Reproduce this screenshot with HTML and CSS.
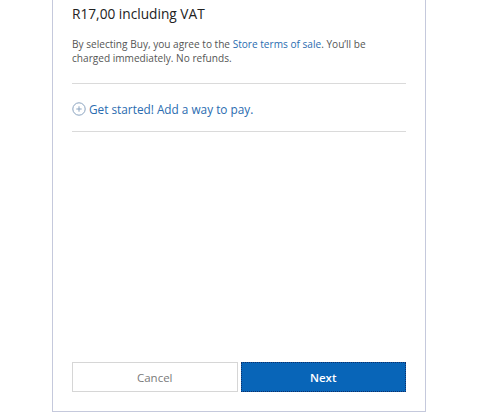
FILE: index.html
```html
<!DOCTYPE html>
<html>
<head>
<meta charset="utf-8">
<link rel="stylesheet" href="styles.css">
</head>
<body>
<div class="page">
  <div class="dialog">
    <div class="content">
      <div class="price">R17,00 including VAT</div>
      <p class="terms">By selecting Buy, you agree to the <a class="link">Store terms of sale</a>. You’ll be charged immediately. No refunds.</p>
      <div class="divider"></div>
      <div class="add-row">
        <svg class="plus" width="14" height="14" viewBox="0 0 14 14"><circle cx="7" cy="7" r="6.2" fill="none" stroke="#8aa3bf" stroke-width="1"/><path d="M7 4.3v5.4M4.3 7h5.4" stroke="#8aa3bf" stroke-width="1"/></svg>
        <span class="add-text">Get started! Add a way to pay.</span>
      </div>
      <div class="divider"></div>
    </div>
    <div class="buttons">
      <button class="btn cancel">Cancel</button>
      <button class="btn next">Next</button>
    </div>
  </div>
</div>
</body>
</html>
```
FILE: styles.css
```css
html, body {
  margin: 0;
  padding: 0;
  background: #ffffff;
}
.page {
  width: 480px;
  height: 414px;
  padding-left: 52px;
  box-sizing: border-box;
  font-family: "Open Sans", "Noto Sans", sans-serif;
}
.dialog {
  width: 374px;
  height: 412px;
  box-sizing: border-box;
  border-left: 1.5px solid #c5c9dc;
  border-right: 1.5px solid #c5c9dc;
  border-bottom: 1.5px solid #c5c9dc;
  padding: 0 19px 0 19px;
  display: flex;
  flex-direction: column;
}
.content {
  flex: 1;
}
.price {
  font-size: 13.7px;
  color: #222;
  margin-top: 3px;
  line-height: 22px;
}
.terms {
  font-size: 10.1px;
  line-height: 14px;
  color: #555;
  margin: 12px 0 0 0;
}
.link { color: #2a6cb0; text-decoration: none; }
.divider {
  height: 1px;
  background: #dadada;
  margin-top: 18px;
}
.add-row {
  display: flex;
  align-items: center;
  gap: 3px;
  margin-top: 16px;
  height: 18px;
}
.add-row + .divider { margin-top: 13px; }
.plus { flex: none; }
.add-text {
  font-size: 11.8px;
  color: #2a6cb0;
}
.buttons {
  display: flex;
  gap: 3px;
  margin-bottom: 19px;
}
.btn {
  flex: 1;
  height: 30px;
  font-family: "Open Sans", "Noto Sans", sans-serif;
  font-size: 11.5px;
  box-sizing: border-box;
  margin: 0;
}
.cancel {
  background: #fff;
  border: 1.5px solid #d6d6d6;
  color: #7a7a7a;
}
.next {
  background: #0865b8;
  border: 1.5px dotted #10306a;
  color: #fff;
  font-weight: 600;
}
```
